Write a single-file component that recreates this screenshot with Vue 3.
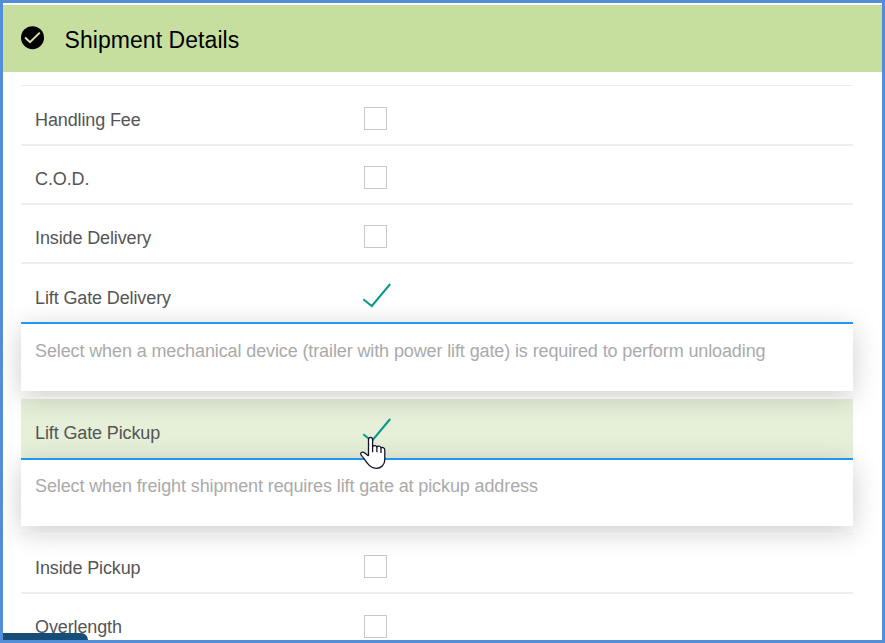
<script setup>
const rows = [
  { label: 'Handling Fee', size: 'tall' },
  { label: 'C.O.D.' },
  { label: 'Inside Delivery' },
  {
    label: 'Lift Gate Delivery',
    checked: true,
    size: 'short',
    help: 'Select when a mechanical device (trailer with power lift gate) is required to perform unloading',
  },
  {
    label: 'Lift Gate Pickup',
    checked: true,
    active: true,
    help: 'Select when freight shipment requires lift gate at pickup address',
  },
  { label: 'Inside Pickup' },
  { label: 'Overlength', size: 'tall' },
]
</script>

<template>
  <main class="frame">
    <header class="header">
      <svg class="status" viewBox="0 0 25 24">
        <circle cx="12.5" cy="11.7" r="11.5" fill="#000" />
        <path d="M5.1 11.5 10 16.2 19.8 6.6" fill="none" stroke="#d0e6aa" stroke-width="2" />
      </svg>
      <h1>Shipment Details</h1>
    </header>
    <section class="list">
      <div v-for="row in rows" :key="row.label" class="item">
        <label class="row" :class="[row.size, { active: row.active, open: row.help }]">
          <span class="name">{{ row.label }}</span>
          <svg v-if="row.checked" class="tick" viewBox="0 0 30 26">
            <path d="M1.3 16.3 9.8 23 28.2 1" fill="none" stroke="#099a8a" stroke-width="2" />
          </svg>
          <span v-else class="box"></span>
        </label>
        <div v-if="row.help" class="help" :class="{ compact: row.active }">
          <p>{{ row.help }}</p>
        </div>
      </div>
    </section>
    <div class="tab"></div>
    <svg class="cursor" viewBox="0 0 26 33">
      <path
        d="M8.5 20V4C8.5 .5 12.6 .5 12.6 4V10.4C13.2 9.3 16.4 9.2 16.9 11C17.6 9.8 20.5 9.8 21 11.8C22 10.9 24.8 11.6 24.8 14V23.5C24.8 29 21 32.3 16.2 32.3C11.8 32.3 9.4 30 7.3 27.2C5.4 24.8 4.4 22.8 2.4 20.6L1.2 19.2C-.3 16.7 2.2 15.4 4.2 16.6L8.5 20"
        fill="#fff"
        stroke="#15152b"
        stroke-width="1.3"
        stroke-linejoin="round"
      />
      <path d="M12.6 9.5V16.3M16.9 11V16.3M21 12V17" fill="none" stroke="#15152b" stroke-width="1.3" />
    </svg>
  </main>
</template>

<style>
body {
  margin: 0;
  overflow: hidden;
}
</style>

<style scoped>
.frame {
  box-sizing: border-box;
  position: relative;
  width: 885px;
  height: 643px;
  padding-top: 2px;
  overflow: hidden;
  border: 3px solid #538dd5;
  background: #fff;
  font-family: "Liberation Sans", Arial, sans-serif;
}
.header {
  display: flex;
  align-items: center;
  box-sizing: border-box;
  height: 67px;
  padding: 0 17px;
  background: #c6df9e;
}
.status {
  width: 25px;
  height: 24px;
  margin-bottom: 2px;
}
h1 {
  margin: 2px 0 0 19.5px;
  font-size: 23px;
  font-weight: 400;
  line-height: 30px;
  letter-spacing: 0.06px;
  color: #000;
}
.list {
  width: 832px;
  margin: 13px 0 0 18px;
  border-top: 1px solid #eee;
}
.row {
  display: flex;
  box-sizing: border-box;
  height: 59px;
  padding: 20px 14px 0;
  border-bottom: 2px solid #eee;
}
.row.tall {
  height: 60px;
  padding-top: 21px;
}
.row.short {
  height: 58px;
}
.row.open {
  border-bottom: 0;
}
.row.active {
  background: #e6f0d9;
}
.name {
  width: 329px;
  margin-top: 1px;
  font-size: 18px;
  line-height: 25px;
  letter-spacing: -0.12px;
  color: #555;
}
.open .name {
  margin-top: 2px;
}
.item:last-child .name {
  margin-top: 0;
}
.box {
  box-sizing: border-box;
  width: 23px;
  height: 23px;
  border: 1px solid #c8c8c8;
  background: #fff;
}
.tick {
  width: 30px;
  height: 26px;
  margin: -1px 0 0 -2px;
}
.help {
  position: relative;
  box-sizing: border-box;
  height: 69px;
  padding: 15px 14px 0;
  border-top: 2px solid #2196f3;
  background: #fff;
  box-shadow: 0 6px 28px rgba(0, 0, 0, 0.2);
}
.help.compact {
  height: 68px;
  padding-top: 14px;
}
.help::after {
  content: "";
  display: block;
  margin: 33px -14px 0;
  border-bottom: 2px solid #eee;
}
.help.compact::after {
  margin-top: 34px;
}
.item:has(.help) {
  height: 135px;
}
.item:has(.compact) {
  height: 136px;
}
.help p {
  height: 25px;
  margin: 0;
  font-size: 18px;
  line-height: 25px;
  letter-spacing: -0.115px;
  white-space: nowrap;
  color: #aaa;
}
.tab {
  position: absolute;
  left: 0;
  bottom: 0;
  width: 85px;
  height: 7px;
  border-top-right-radius: 7px;
  background: #164d79;
}
.cursor {
  position: absolute;
  left: 357px;
  top: 433px;
  width: 26px;
  height: 33px;
}
</style>
